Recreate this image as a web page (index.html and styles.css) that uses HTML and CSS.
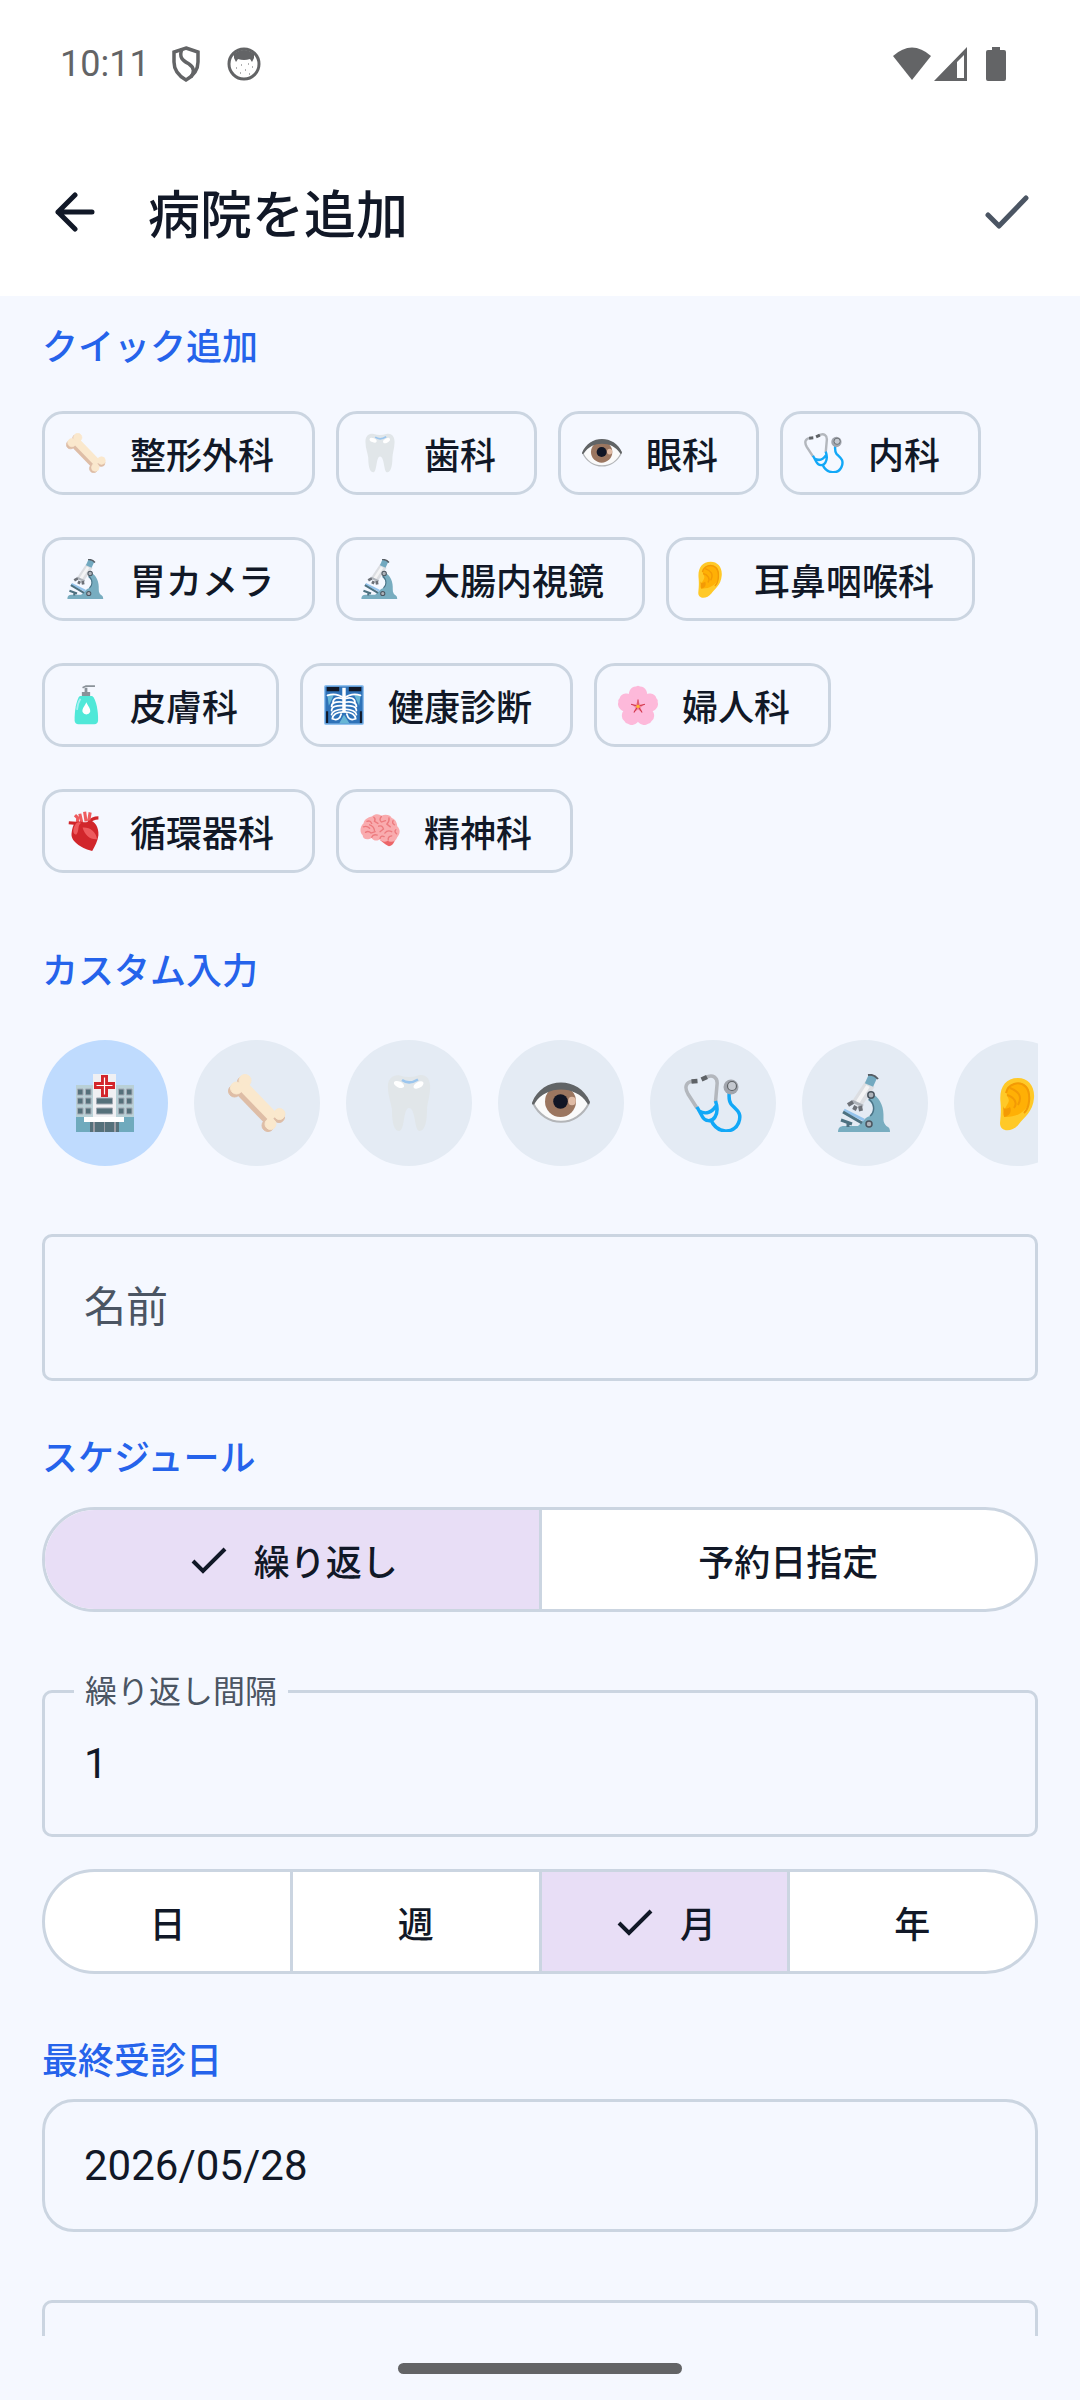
FILE: index.html
```html
<!DOCTYPE html>
<html lang="ja">
<head>
    <meta charset="UTF-8">
    <meta name="viewport" content="width=device-width, initial-scale=1.0">
    <title>病院を追加</title>
    <link rel="stylesheet" href="styles.css">
</head>
<body>

    <!-- shared icons -->
    <svg class="sprite" aria-hidden="true">
        <symbol id="i-check" viewBox="0 0 46 46">
            <path d="M7 24 L17 34 L39 12" fill="none" stroke="currentColor" stroke-width="4"/>
        </symbol>
        <symbol id="i-hospital" viewBox="0 0 58 58">
            <path fill="#b9d0d6" d="M0 11h58v34H0z"/>
            <path fill="#6faabd" d="M0 43h58v15H0z"/>
            <path fill="#f0f0f3" d="M17 0h23v58H17z"/>
            <g fill="#55707a" stroke="#a3a9b3" stroke-width="1">
                <path d="M1.500 15h5.500v6H1.500zM9.500 15h5.500v6H9.500zM1.500 24h5.500v6H1.500zM9.500 24h5.500v6H9.500zM1.500 34h5.500v6H1.500zM9.500 34h5.500v6H9.500z"/>
                <path d="M42.500 15h5.500v6h-5.500zM50.500 15h5.500v6h-5.500zM42.500 24h5.500v6h-5.500zM50.500 24h5.500v6h-5.500zM42.500 34h5.500v6h-5.500zM50.500 34h5.500v6h-5.500z"/>
                <path d="M20.500 24h16v6h-16zM20.500 34h16v6h-16z"/>
            </g>
            <path fill="#9c9da5" d="M14 47h29v11H14z"/>
            <path fill="#55707a" d="M14 48h3v10h-3zM19 48h9v10h-9zM29 48h9v10h-9zM40 48h3v10h-3z"/>
            <path fill="#fff" d="M8 43h40v5H8z"/>
            <path fill="#d3242b" d="M25 1h7v7h7v7h-7v8h-7v-8h-7V8h7z"/>
            <path fill="none" stroke="#fff" stroke-width="1.200" d="M28.500 3.500v17M20.500 11.500h16"/>
        </symbol>
        <symbol id="i-bone" viewBox="0 0 58 58">
            <g fill="#debda6" stroke="#debda6">
                <circle cx="15" cy="8" r="5.500"/><circle cx="6.500" cy="17" r="6"/>
                <circle cx="51" cy="43" r="5.500"/><circle cx="40" cy="51.500" r="6"/>
                <path d="M10 14 L42 47" stroke-width="11"/>
            </g>
            <g fill="#fae8cd" stroke="#fae8cd">
                <circle cx="17" cy="6.500" r="6"/><circle cx="8.500" cy="14" r="6"/>
                <circle cx="51.500" cy="40" r="5.500"/><circle cx="42.500" cy="50" r="5.500"/>
                <path d="M14 11 L46 44" stroke-width="11"/>
            </g>
        </symbol>
        <symbol id="i-tooth" viewBox="0 0 58 58">
            <path fill="#e1e6e9" d="M8 14C7 4 14 0 20 1.500C26 3.500 32 3.500 38 1.500C45-.5 51 4 50 15C50 22 47 30 47 36C47 44 46 56 40 57C34 58 36 34 29 34C23 34 25 57 19 57C13 57 12 44 12 36C11 28 8 22 8 14Z"/>
            <path fill="none" stroke="#9cc6ee" stroke-width="2.500" d="M22 6Q29 11 38 5.500"/>
            <ellipse cx="19" cy="10.500" rx="5.500" ry="3" fill="#fff" transform="rotate(25 19 10.500)"/>
            <ellipse cx="38.500" cy="11" rx="5.500" ry="3" fill="#fff" transform="rotate(-30 38.500 11)"/>
        </symbol>
        <symbol id="i-eye" viewBox="0 0 58 58">
            <path fill="#fafafa" stroke="#b3b5b8" stroke-width="2" d="M1 29C13 4 45 4 57 29C45 54 13 54 1 29Z"/>
            <circle cx="28.500" cy="27.500" r="15.500" fill="#9b7660"/>
            <path fill="#616466" d="M0 29C10 2 47 2 58 28C57 31 56 31 55 29C44 11 14 11 3 29C2 31 0 31 0 29Z"/>
            <circle cx="28.500" cy="27.500" r="7.300" fill="#101525"/>
            <ellipse cx="40" cy="27" rx="3.800" ry="4.200" fill="#dfbba5"/>
        </symbol>
        <symbol id="i-steth" viewBox="0 0 58 58">
            <g fill="none" stroke-width="3.500">
                <path stroke="#b3b7bd" d="M9 7C2 8 0 13 4 20L13 34M21 4C29-1 34 4 33 11L31.500 28"/>
                <path stroke="#12a8f7" d="M13 33L18 42C21 48 28 48 31 43C34 38 34 34 31.500 27M15 37C22 41 28 38 32 32M27 46C33 60 50 60 54.500 49C59 38 51 35 47 30C44 26 45 22 45.500 16"/>
                <path stroke="#5e6266" stroke-width="4.500" d="M7.500 7.500L13.500 7M17.500 5.500L23 3"/>
            </g>
            <circle cx="47" cy="13" r="7.500" fill="#a1a5ad"/>
            <circle cx="48" cy="12" r="4.500" fill="#c4c8cf" stroke="#5e6266" stroke-width="1.200"/>
        </symbol>
        <symbol id="i-scope" viewBox="0 0 58 58">
            <path fill="#78adc0" d="M2 58C2 54 4 52 8 52H22C27 48 28 44 34 42C39 37 38 30 32 26L37 20C45 25 48 34 47.500 44C47 49 50 52 52 53Q54 54 54 58Z"/>
            <path fill="none" stroke="#4b7386" stroke-width="1.500" d="M33 25C40 31 38 39 34 42"/>
            <path stroke="#95c4ed" stroke-width="3" d="M8 36L28 46"/>
            <path stroke="#4d7180" stroke-width="3" d="M7 38L26 49M5 46L16 50M12 49V53"/>
            <path stroke="#dcdee2" stroke-width="11" d="M34 10L20 31"/>
            <path stroke="#f4f4f5" stroke-width="4" d="M32 12L21 29"/>
            <path stroke="#aeb3ba" stroke-width="3" d="M16 27L27 32"/>
            <path stroke="#6d7178" stroke-width="4" d="M17 28L12 31M20 32L18 36M24 32L25 37"/>
            <path stroke="#72a9c0" stroke-width="9" d="M37 2L33 11"/>
            <path stroke="#565d64" stroke-width="2" d="M32 1Q38 0 42 5" fill="none"/>
            <circle cx="35" cy="21" r="3.200" fill="#aeb3ba" stroke="#4c5660" stroke-width="1.500"/>
            <circle cx="33" cy="50" r="3" fill="#aeb3ba" stroke="#4c5660" stroke-width="1.500"/>
        </symbol>
        <symbol id="i-ear" viewBox="0 0 58 58">
            <path fill="#ffc928" d="M30 4C40 4 47 12 46 24C45 38 36 43 31 50C25 58 12 59 12 49C13 40 13 34 12.500 28C11 14 17 4 30 4Z"/>
            <path fill="#ffb005" d="M30 9C39 8 43 16 42 27C38 38 29 43 18 43C13 42 16 36 19 31C24 24 17 23 19 17C20 12 24 9 30 9Z"/>
            <path fill="none" stroke="#f39a05" stroke-width="2" d="M18 19C20 10 31 6 38 13C43 19 42 34 36 39M22 14C30 17 35 22 30 31M19 21C26 23 30 29 26 34"/>
            <path fill="#f39a05" d="M15 32C16 36 19 35 22 33C24 37 22 42 16 43Z"/>
        </symbol>
        <symbol id="i-lotion" viewBox="0 0 58 58">
            <path fill="#8a9299" d="M23 10h12v7H23zM27 4h4v7h-4z"/>
            <path fill="none" stroke="#8a9299" stroke-width="2.500" d="M24 4L29 1.500H42"/>
            <path fill="#50e8d8" d="M20 16H38C44 20 47 40 46.500 52Q46 57 41 57H18Q13 57 12.500 52C12 40 15 20 20 16Z"/>
            <path fill="none" stroke="#a8eef2" stroke-width="2.500" d="M21 20Q17 26 16 36"/>
            <path fill="#fff" d="M29.500 25C32 31 36 34 35 39A6 6 0 0 1 24 39C23 34 27 31 29.500 25Z"/>
        </symbol>
        <symbol id="i-xray" viewBox="0 0 58 58">
            <rect x="1" y="1" width="56" height="56" rx="2" fill="#2e72b8" stroke="#91c1ef" stroke-width="2"/>
            <path fill="#111827" d="M4 3h18v6H4zM36 3h18v6H36zM3 38h3v17H3zM52 38h3v17h-3z"/>
            <path fill="#67b6d6" d="M5 15L15 13L7 30zM53 15L43 13L51 30zM22 56L29 43L37 56z"/>
            <path stroke="#fff" stroke-width="5" d="M29 4V40"/>
            <g fill="none" stroke="#fff" stroke-width="2.500" stroke-linecap="round">
                <path d="M5 15Q18 11 29 19Q40 11 53 15"/>
                <path d="M28 20Q14 16 13 25M28 25Q11 23 11 31M28 30Q11 29 11 37M28 35Q12 36 11 43M28 39Q13 40 12 49Q22 53 25 42"/>
                <path d="M30 20Q44 16 45 25M30 25Q47 23 47 31M30 30Q47 29 47 37M30 35Q46 36 47 43M30 39Q45 40 46 49Q36 53 33 42"/>
            </g>
        </symbol>
        <symbol id="i-flower" viewBox="0 0 58 58">
            <g fill="#fdb9da">
                <path id="petal" d="M29 31C20 27 13 15 17 8Q20 2 26 2L29 1L32 2Q38 2 41 8C45 15 38 27 29 31Z"/>
                <use href="#petal" transform="rotate(72 29 31)"/>
                <use href="#petal" transform="rotate(144 29 31)"/>
                <use href="#petal" transform="rotate(216 29 31)"/>
                <use href="#petal" transform="rotate(288 29 31)"/>
            </g>
            <path fill="#f58fa3" d="M29 22L32 28L38 28L33 33L35 39L29 36L23 39L25 33L20 28L26 28Z"/>
            <path fill="none" stroke="#d0324a" stroke-width="1.500" d="M29 31V21M29 31L39 28M29 31L35 40M29 31L23 40M29 31L19 28"/>
            <circle cx="29" cy="31" r="2.500" fill="#ffb62e"/>
        </symbol>
        <symbol id="i-heart" viewBox="0 0 58 58">
            <g fill="none" stroke="#ee5a5d" stroke-width="4.500">
                <path stroke="#d1262b" d="M4 17L15 18M33 16Q38 10 47 10"/>
                <path d="M16 22L17 10L13 6M23 17L20 4M29 15L27 1M33 14L35 2"/>
            </g>
            <path fill="#d1262b" d="M13 17C20 12 28 20 33 14C41 13 48 24 47 35C46 44 42 50 38 58C26 55 7 46 8 33Q9 22 13 17Z"/>
            <path fill="#ee5a5d" d="M11 26C13 17 18 15 22 17C16 21 20 28 15 34C11 34 10 30 11 26ZM24 24C34 23 44 30 45 41C35 42 27 35 24 24Z"/>
        </symbol>
        <symbol id="i-brain" viewBox="0 0 58 58">
            <path fill="#ec6568" d="M29 42Q38 50 42 51Q47 51 51 42Z"/>
            <path fill="#f9abae" d="M5 18C7 10 14 9 17 8C23 3 29 5 31 7C37 4 44 6 46 10C53 12 54 20 54 22C60 28 57 35 54 38C52 45 44 46 40 43C36 46 31 44 29 41C24 45 18 42 17 39C10 43 3 40 4 35C-1 31 0 22 5 18Z"/>
            <path fill="none" stroke="#ec7a7e" stroke-width="2" stroke-linecap="round" d="M10 15Q15 13 17 18M20 9Q23 11 21 15L26 18M31 8Q27 13 31 16L37 14M42 10Q43 15 39 19L44 23M48 14Q46 18 50 20M5 23Q10 21 14 25M14 20Q20 22 21 28M8 31Q12 28 16 32L22 30M17 38Q19 33 25 35M27 22Q32 20 34 26L29 30M36 32Q40 27 46 30M29 40Q30 35 35 37M41 42Q40 37 46 36M52 27Q49 30 53 33"/>
        </symbol>
    </svg>

    <div class="status-bar">
        <span class="clock">10:11</span>
        <svg class="shield" viewBox="0 0 30 36">
            <path d="M15 2L27 6V16C27 25 22 30 15 34C8 30 3 25 3 16V6Z" fill="none" stroke="currentColor" stroke-width="3.500"/>
            <path d="M11 3C7 12 13 15 18 18C24 22 23 27 20 31" fill="none" stroke="currentColor" stroke-width="3.500"/>
        </svg>
        <svg class="face" viewBox="0 0 34 34">
            <circle cx="17" cy="17" r="15" fill="none" stroke="currentColor" stroke-width="3"/>
            <path d="M7 7Q17-1 27 7V11L25 15L23 12Q17 14 11 12L9 15L7 11Z" fill="currentColor"/>
            <path d="M9 21h1M14 18h1M18 23h1M21 17h1M25 20h1M13 26h1M22 27h1" stroke="currentColor" stroke-width="1"/>
        </svg>
        <svg class="wifi" viewBox="0 0 40 34">
            <path d="M1 9Q20-8 39 9L20 33Z" fill="currentColor"/>
        </svg>
        <svg class="signal" viewBox="0 0 34 34">
            <path d="M33 0V34H0ZM30 8L23 15V31H30Z" fill="currentColor" fill-rule="evenodd"/>
        </svg>
        <svg class="battery" viewBox="0 0 20 34">
            <path d="M6 0H14V3H18Q20 3 20 5V32Q20 34 18 34H2Q0 34 0 32V5Q0 3 2 3H6Z" fill="currentColor"/>
        </svg>
    </div>

    <header class="app-bar">
        <button class="icon-btn back" type="button" aria-label="戻る">
            <svg viewBox="0 0 40 40"><path d="M20 3L3 20L20 37M3 20H37" fill="none" stroke="currentColor" stroke-width="5" stroke-linecap="round" stroke-linejoin="round"/></svg>
        </button>
        <h1>病院を追加</h1>
        <button class="icon-btn save" type="submit" form="hospital-form" aria-label="保存">
            <svg viewBox="0 0 44 34"><path d="M3 20L14 31L41 3" fill="none" stroke="currentColor" stroke-width="5" stroke-linecap="round" stroke-linejoin="round"/></svg>
        </button>
    </header>

    <main>
        <form id="hospital-form" onsubmit="return false">
            <h2>クイック追加</h2>
            <div class="chips">
                <button type="button" class="chip"><svg><use href="#i-bone"/></svg>整形外科</button>
                <button type="button" class="chip"><svg><use href="#i-tooth"/></svg>歯科</button>
                <button type="button" class="chip"><svg><use href="#i-eye"/></svg>眼科</button>
                <button type="button" class="chip"><svg><use href="#i-steth"/></svg>内科</button>
                <button type="button" class="chip"><svg><use href="#i-scope"/></svg>胃カメラ</button>
                <button type="button" class="chip"><svg><use href="#i-scope"/></svg>大腸内視鏡</button>
                <button type="button" class="chip"><svg><use href="#i-ear"/></svg>耳鼻咽喉科</button>
                <button type="button" class="chip"><svg><use href="#i-lotion"/></svg>皮膚科</button>
                <button type="button" class="chip"><svg><use href="#i-xray"/></svg>健康診断</button>
                <button type="button" class="chip"><svg><use href="#i-flower"/></svg>婦人科</button>
                <button type="button" class="chip"><svg><use href="#i-heart"/></svg>循環器科</button>
                <button type="button" class="chip"><svg><use href="#i-brain"/></svg>精神科</button>
            </div>

            <h2 class="custom-title">カスタム入力</h2>
            <div class="icon-row">
                <button type="button" class="round active" aria-label="病院"><svg><use href="#i-hospital"/></svg></button>
                <button type="button" class="round" aria-label="骨"><svg><use href="#i-bone"/></svg></button>
                <button type="button" class="round" aria-label="歯"><svg><use href="#i-tooth"/></svg></button>
                <button type="button" class="round" aria-label="目"><svg><use href="#i-eye"/></svg></button>
                <button type="button" class="round" aria-label="聴診器"><svg><use href="#i-steth"/></svg></button>
                <button type="button" class="round" aria-label="顕微鏡"><svg><use href="#i-scope"/></svg></button>
                <button type="button" class="round" aria-label="耳"><svg><use href="#i-ear"/></svg></button>
            </div>

            <div class="field name-field">
                <input type="text" id="name" placeholder="名前" aria-label="名前">
            </div>

            <h2 class="schedule-title">スケジュール</h2>
            <div class="segments">
                <label><input type="radio" name="mode" checked><svg><use href="#i-check"/></svg>繰り返し</label>
                <label><input type="radio" name="mode"><svg><use href="#i-check"/></svg>予約日指定</label>
            </div>

            <div class="field interval-field">
                <label for="interval">繰り返し間隔</label>
                <input type="text" inputmode="numeric" id="interval" value="1">
            </div>
            <div class="segments">
                <label><input type="radio" name="unit"><svg><use href="#i-check"/></svg>日</label>
                <label><input type="radio" name="unit"><svg><use href="#i-check"/></svg>週</label>
                <label><input type="radio" name="unit" checked><svg><use href="#i-check"/></svg>月</label>
                <label><input type="radio" name="unit"><svg><use href="#i-check"/></svg>年</label>
            </div>

            <h2 class="date-title"><label for="last-visit">最終受診日</label></h2>
            <input class="date-input" type="text" id="last-visit" value="2026/05/28">

            <div class="field memo-field">
                <input type="text" id="memo" aria-label="メモ">
            </div>
        </form>
    </main>

    <div class="nav-bar"><span class="handle"></span></div>

</body>
</html>
```
FILE: styles.css
```css
* {
    box-sizing: border-box;
}
body {
    margin: 0;
    height: 100vh;
    display: flex;
    flex-direction: column;
    font-family: Roboto, "Noto Sans CJK JP", sans-serif;
    background: #f5f8ff;
    color: #111827;
}
button, input {
    font-family: inherit;
    color: inherit;
}
button {
    padding: 0;
    border: none;
    background: none;
    cursor: pointer;
}
svg {
    display: block;
    flex: none;
}
.sprite {
    position: absolute;
    width: 0;
    height: 0;
}

/* status bar */
.status-bar {
    display: flex;
    align-items: center;
    flex: none;
    height: 128px;
    padding: 0 74px 0 60px;
    background: #fff;
    color: #636466;
}
.clock {
    font-size: 36px;
    line-height: 52px;
}
.shield {
    width: 30px;
    height: 36px;
    margin-left: 21px;
}
.face {
    width: 34px;
    height: 34px;
    margin-left: 26px;
}
.wifi {
    width: 40px;
    height: 34px;
    margin-left: auto;
}
.signal {
    width: 34px;
    height: 34px;
    margin-left: 2px;
}
.battery {
    width: 20px;
    height: 34px;
    margin-left: 18px;
}

/* app bar */
.app-bar {
    display: flex;
    align-items: center;
    flex: none;
    height: 168px;
    padding: 0 51px 0 55px;
    background: #fff;
}
.app-bar h1 {
    flex: 1;
    margin: 0 0 0 53px;
    font-size: 52px;
    font-weight: 500;
    line-height: 72px;
}
h1, h2, input::placeholder {
    font-family: "Noto Sans CJK JP", sans-serif;
}
.back svg {
    width: 40px;
    height: 40px;
}
.save {
    color: #4b5563;
}
.save svg {
    width: 44px;
    height: 34px;
}

main {
    flex: 1;
    min-height: 0;
    padding: 22px 42px 0;
    overflow: hidden;
}
h2 {
    margin: 0;
    font-size: 36px;
    font-weight: 500;
    line-height: 52px;
    color: #2563eb;
}

/* quick add */
.chips {
    display: flex;
    flex-wrap: wrap;
    gap: 42px 21px;
    margin-top: 41px;
}
.chip {
    display: flex;
    align-items: center;
    gap: 24px;
    height: 84px;
    padding: 0 38px 0 21px;
    border: 3px solid #cbd5e1;
    border-radius: 21px;
    font-size: 36px;
    font-weight: 500;
    white-space: nowrap;
}
.chip svg {
    width: 40px;
    height: 40px;
}

/* custom input */
.custom-title {
    margin-top: 69px;
}
.icon-row {
    display: flex;
    gap: 26px;
    margin-top: 46px;
    overflow: hidden;
}
.round {
    display: flex;
    align-items: center;
    justify-content: center;
    flex: none;
    width: 126px;
    height: 126px;
    border-radius: 50%;
    background: #e4ebf4;
}
.round.active {
    background: #bfdbfe;
}
.round svg {
    width: 58px;
    height: 58px;
}

.field {
    position: relative;
}
.field input {
    display: block;
    width: 100%;
    height: 147px;
    padding: 0 39px;
    border: 3px solid #cbd5e1;
    border-radius: 10px;
    background: none;
    font-size: 42px;
}
.field input::placeholder {
    color: #4b5563;
    opacity: 1;
}
.field label {
    position: absolute;
    top: -20px;
    left: 32px;
    padding: 0 11px;
    background: #f5f8ff;
    font-size: 32px;
    line-height: 44px;
    color: #4b5563;
}
.name-field {
    margin-top: 68px;
}
.schedule-title {
    margin-top: 48px;
}
.interval-field {
    margin-top: 78px;
}

/* segmented buttons */
.segments {
    display: flex;
    height: 105px;
    margin-top: 26px;
    border: 3px solid #cbd5e1;
    border-radius: 53px;
    background: #fff;
    overflow: hidden;
}
.interval-field + .segments {
    margin-top: 32px;
}
.segments label {
    display: flex;
    flex: 1;
    align-items: center;
    justify-content: center;
    gap: 22px;
    font-size: 36px;
    font-weight: 500;
    cursor: pointer;
}
.segments label + label {
    border-left: 3px solid #cbd5e1;
}
.segments input {
    position: absolute;
    opacity: 0;
}
.segments svg {
    display: none;
    width: 46px;
    height: 46px;
}
.segments label:has(input:checked) {
    background: #e8def6;
}
.segments input:checked + svg {
    display: block;
}

.date-title {
    margin-top: 58px;
}
.date-input {
    display: block;
    width: 100%;
    height: 133px;
    margin-top: 15px;
    padding: 0 39px;
    border: 3px solid #cbd5e1;
    border-radius: 32px;
    background: none;
    font-size: 42px;
}
.memo-field {
    margin-top: 68px;
}

.nav-bar {
    display: flex;
    align-items: center;
    justify-content: center;
    flex: none;
    height: 64px;
}
.handle {
    width: 284px;
    height: 11px;
    border-radius: 6px;
    background: #636466;
}
```
